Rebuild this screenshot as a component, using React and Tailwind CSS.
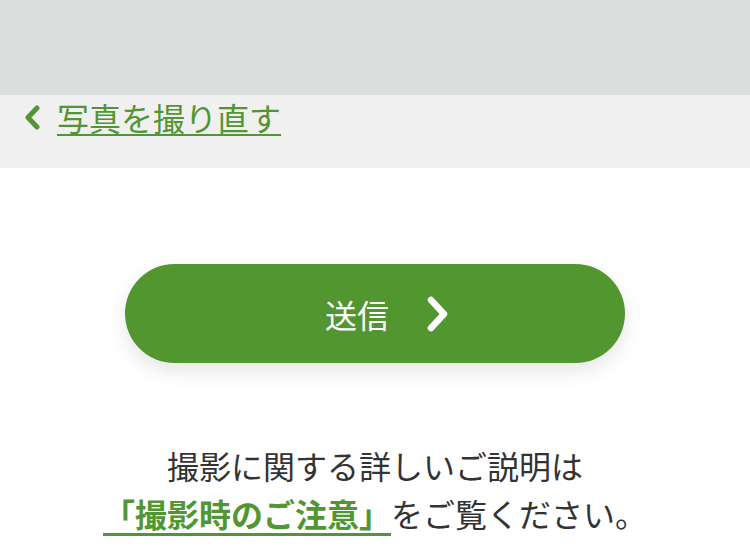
export default function App() {
  const font = { fontFamily: '"Noto Sans CJK JP", "Noto Sans", sans-serif' };
  return (
    <div className="flex min-h-[560px] w-[750px] flex-col bg-white" style={font}>
      <div className="h-[95px] w-full bg-[#dcdedd]" />
      <div className="flex h-[73px] items-start bg-[#f0f0f0] pl-[24px] pt-0">
        <a href="#" className="flex items-center gap-[16px] text-[#519632]">
          <svg width="17" height="25" viewBox="0 0 17 25" fill="none">
            <path d="M13 3 L4 12.5 L13 22" stroke="#519632" strokeWidth="5" strokeLinecap="round" strokeLinejoin="round" />
          </svg>
          <span className="text-[32px] leading-[44px] underline decoration-2 underline-offset-[3px]">写真を撮り直す</span>
        </a>
      </div>
      <div className="flex justify-center pt-[96px]">
        <button className="flex h-[99px] w-[500px] items-center justify-center gap-[38px] rounded-full bg-[#52962f] pl-[24px] text-white shadow-[0_8px_20px_rgba(0,0,0,0.10)]">
          <span className="text-[32px] leading-none">送信</span>
          <svg width="22" height="36" viewBox="0 0 22 36" fill="none">
            <path d="M4 4 L17 18 L4 32" stroke="white" strokeWidth="6.5" strokeLinecap="round" strokeLinejoin="round" />
          </svg>
        </button>
      </div>
      <div className="pt-[77px] text-center text-[32px] leading-[50px] text-[#333333]">
        <p>撮影に関する詳しいご説明は</p>
        <p className="-mt-[2px]">
          <a href="#" className="font-bold text-[#519632] underline decoration-[3px] underline-offset-[6px]">「撮影時のご注意」</a>
          をご覧ください。
        </p>
      </div>
    </div>
  );
}
